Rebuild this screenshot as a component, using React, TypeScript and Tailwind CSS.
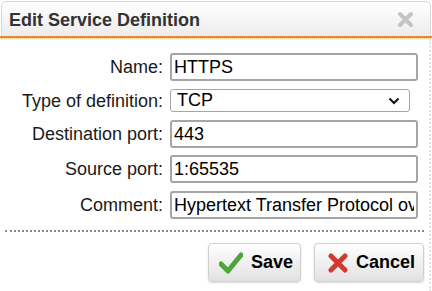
import React from "react";

const CloseIcon = () => (
  <svg width="17" height="17" viewBox="0 0 17 17">
    <path d="M3 3 L14 14 M14 3 L3 14" stroke="#c4c4c4" strokeWidth="4" strokeLinecap="round" />
  </svg>
);

const CheckIcon = () => (
  <svg width="24" height="22" viewBox="0 0 24 22">
    <path d="M2 12 L9 19 L22 3" fill="none" stroke="#4fa53a" strokeWidth="5" strokeLinecap="round" strokeLinejoin="round" />
  </svg>
);

const CrossIcon = () => (
  <svg width="20" height="20" viewBox="0 0 20 20">
    <path d="M3 3 L17 17 M17 3 L3 17" stroke="#d33a2f" strokeWidth="5" strokeLinecap="round" />
  </svg>
);

const inputCls =
  "h-[28px] border-2 border-[#a5a5a5] rounded-[3px] px-[2px] text-[18px] text-black bg-white outline-none";

const Label: React.FC<React.PropsWithChildren> = ({ children }) => (
  <div className="w-[164px] shrink-0 text-right pr-[1px] text-[18px] leading-[20px] text-[#1a1a1a]">{children}</div>
);

export default function App() {
  return (
    <div
      className="w-[432px] h-[291px] bg-white overflow-hidden"
      style={{ fontFamily: '"Liberation Sans", Arial, sans-serif' }}
    >
      <div className="h-[35px] mx-[1px] mt-[1px] border border-[#d8d8d8] border-b-0 rounded-t-[5px] bg-gradient-to-b from-white to-[#ececec] flex items-center justify-between pl-[7px] pr-[16px]">
        <span className="text-[18px] font-bold text-[#333] leading-none mt-[1px]">Edit Service Definition</span>
        <CloseIcon />
      </div>
      <div className="h-[2px] bg-[#e5892b]" />
      <div className="border-t border-dotted border-[#f3c99a] mx-[1px]" />
      <div className="border-r-2 border-dotted border-[#e4e4e4] h-[252px] mr-[1px]">
        <div className="pt-[14px] flex flex-col">
          <div className="flex items-center gap-[6px]">
            <Label>Name:</Label>
            <input className={`${inputCls} w-[248px]`} defaultValue="HTTPS" />
          </div>
          <div className="flex items-center gap-[6px] mt-[8px]">
            <Label>Type of definition:</Label>
            <div className="w-[240px] h-[23px] border border-[#a5a5a5] rounded-[3px] flex items-center justify-between pl-[6px] pr-[9px] text-[18px] text-black">
              <span>TCP</span>
              <svg width="12" height="8" viewBox="0 0 12 8">
                <path d="M1.5 1.5 L6 6 L10.5 1.5" fill="none" stroke="#111" strokeWidth="2" />
              </svg>
            </div>
          </div>
          <div className="flex items-center gap-[6px] mt-[8px]">
            <Label>Destination port:</Label>
            <input className={`${inputCls} w-[248px]`} defaultValue="443" />
          </div>
          <div className="flex items-center gap-[6px] mt-[7px]">
            <Label>Source port:</Label>
            <input className={`${inputCls} w-[248px]`} defaultValue="1:65535" />
          </div>
          <div className="flex items-center gap-[6px] mt-[8px]">
            <Label>Comment:</Label>
            <input className={`${inputCls} w-[248px]`} defaultValue="Hypertext Transfer Protocol over TLS/SSL" />
          </div>
          <div className="mt-[11px] ml-[5px] w-[419px] border-t-2 border-dotted border-[#8a8a8a]" />
          <div className="flex justify-end gap-[13px] mt-[11px] pr-[5px]">
            <button className="w-[93px] h-[39px] border border-[#d0d0d0] rounded-[4px] bg-gradient-to-b from-white to-[#e2e2e2] shadow-[0_1px_2px_rgba(0,0,0,0.15)] flex items-center gap-[8px] pl-[10px] text-[18px] font-bold text-black">
              <CheckIcon />
              <span>Save</span>
            </button>
            <button className="w-[110px] h-[39px] border border-[#d0d0d0] rounded-[4px] bg-gradient-to-b from-white to-[#e2e2e2] shadow-[0_1px_2px_rgba(0,0,0,0.15)] flex items-center gap-[8px] pl-[13px] text-[18px] font-bold text-black">
              <CrossIcon />
              <span>Cancel</span>
            </button>
          </div>
        </div>
      </div>
    </div>
  );
}
